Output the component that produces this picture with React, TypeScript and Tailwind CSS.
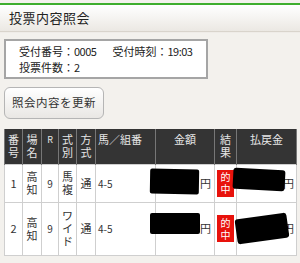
const jp = { fontFamily: '"Noto Sans CJK JP", "DejaVu Sans", sans-serif' };

type Row = {
  no: string;
  place: string[];
  race: string;
  kind: string[];
  method: string;
  combo: string;
  tall: boolean;
};

const rows: Row[] = [
  { no: "1", place: ["高", "知"], race: "9", kind: ["馬", "複"], method: "通", combo: "4-5", tall: false },
  { no: "2", place: ["高", "知"], race: "9", kind: ["ワ", "イ", "ド"], method: "通", combo: "4-5", tall: true },
];

function Stack({ chars }: { chars: string[] }) {
  return (
    <div className="flex flex-col items-center leading-[13px]">
      {chars.map((c, i) => (
        <span key={i}>{c}</span>
      ))}
    </div>
  );
}

function Hit() {
  return (
    <div className="mx-auto flex h-[27px] w-[17px] flex-col items-center justify-center bg-[#e8120c] text-[10px] leading-[12px] text-white">
      <span>的</span>
      <span>中</span>
    </div>
  );
}

function Blot({ className }: { className: string }) {
  return <div className={`absolute bg-black ${className}`} />;
}

export default function App() {
  const th = "border-x border-[#777] align-top pt-[4px] font-normal text-[#e6e6e6]";
  const td = "border border-[#cfcfcf] text-center align-middle";
  return (
    <div className="h-[263px] w-[300px] overflow-hidden bg-[#f3f1ed] text-[#222]" style={jp}>
      <div className="h-[3px] bg-[#f3f1ed]" />
      <div className="h-[2px] bg-[#3fae2e]" />
      <div className="flex h-[26px] items-center bg-gradient-to-b from-[#ffffff] to-[#ebe8e3] pl-[9px] text-[13px] tracking-[0.5px] shadow-[0_1px_1px_#d9d4cc]">
        投票内容照会
      </div>

      <div className="ml-[4px] mt-[8px] flex h-[40px] w-[204px] flex-col justify-center border-2 border-[#a5a5a5] bg-white pl-[13px] text-[11px] leading-[16px]">
        <div className="flex">
          <span>受付番号：</span>
          <span className="tracking-[-0.5px]">0005</span>
          <span className="ml-[16px]">受付時刻：</span>
          <span className="tracking-[-0.5px]">19:03</span>
        </div>
        <div className="flex">
          <span>投票件数：</span>
          <span>2</span>
        </div>
      </div>

      <button
        type="button"
        className="ml-[4px] mt-[8px] flex h-[32px] w-[100px] items-center justify-center rounded-[6px] border border-[#b5b5b5] bg-gradient-to-b from-[#ffffff] to-[#e9e7e4] text-[11.5px] tracking-[0.5px] text-[#333]"
      >
        照会内容を更新
      </button>

      <div className="relative ml-[4px] mt-[10px] w-[292px]">
        <table className="w-[292px] table-fixed border-collapse text-[11px] leading-[13px]">
          <colgroup>
            <col className="w-[18px]" />
            <col className="w-[19px]" />
            <col className="w-[17px]" />
            <col className="w-[18px]" />
            <col className="w-[19px]" />
            <col className="w-[60px]" />
            <col className="w-[59px]" />
            <col className="w-[22px]" />
            <col className="w-[60px]" />
          </colgroup>
          <thead>
            <tr className="h-[35px] bg-[#343434]">
              <th className={th}><Stack chars={["番", "号"]} /></th>
              <th className={th}><Stack chars={["場", "名"]} /></th>
              <th className={`${th} text-[9px]`}>R</th>
              <th className={th}><Stack chars={["式", "別"]} /></th>
              <th className={th}><Stack chars={["方", "式"]} /></th>
              <th className={`${th} pl-[2px] text-left`}>馬／組番</th>
              <th className={th}>金額</th>
              <th className={th}><Stack chars={["結", "果"]} /></th>
              <th className={th}>払戻金</th>
            </tr>
          </thead>
          <tbody className="bg-white text-[#333]">
            {rows.map((r) => (
              <tr key={r.no} className={r.tall ? "h-[53px]" : "h-[38px]"}>
                <td className={td}>{r.no}</td>
                <td className={td}><Stack chars={r.place} /></td>
                <td className={`${td} text-[10px]`}>{r.race}</td>
                <td className={td}><Stack chars={r.kind} /></td>
                <td className={td}>{r.method}</td>
                <td className={`${td} pl-[2px] text-left text-[10px]`}>{r.combo}</td>
                <td className={`${td} pr-[3px] text-right`}>円</td>
                <td className={td}><Hit /></td>
                <td className={`${td} pr-[2px] text-right`}>円</td>
              </tr>
            ))}
          </tbody>
        </table>

        <Blot className="left-[146px] top-[40px] h-[25px] w-[49px] rotate-[1deg] rounded-[2px]" />
        <Blot className="left-[229px] top-[40px] h-[21px] w-[52px] rotate-[3deg] rounded-[3px]" />
        <Blot className="left-[146px] top-[84px] h-[21px] w-[50px] rounded-[2px]" />
        <Blot className="left-[232px] top-[87px] h-[25px] w-[52px] -rotate-[8deg] rounded-[3px]" />
      </div>
    </div>
  );
}
